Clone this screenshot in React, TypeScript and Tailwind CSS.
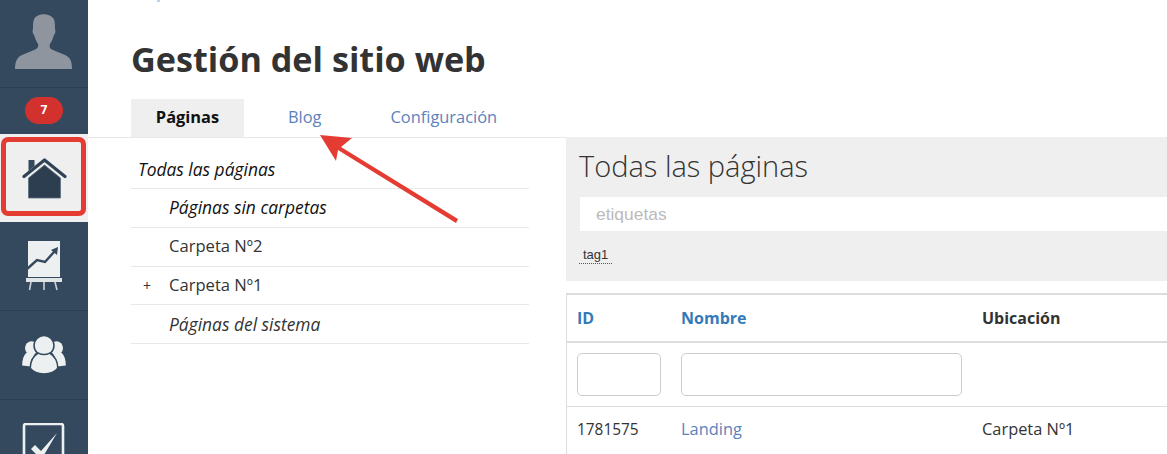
const sideItem = 'flex items-center justify-center border-b border-[#2c3e50]';

const Avatar = () => (
  <svg width="58" height="56" viewBox="0 0 58 56" fill="#8e959e">
    <path d="M22 2c5-3 12-2 15 1 3 2 3 7 3 12 1 2 0 5-1 6-1 3-2 6-4 9-1 3 0 5 3 6l12 5c4 2 7 4 7 14H0c0-9 3-12 7-14l12-5c3-1 5-3 4-6-2-3-3-6-4-9-1-1-2-4-1-6 0-6 0-11 4-13z" />
  </svg>
);

const HomeIcon = () => (
  <svg width="46" height="44" viewBox="0 0 46 44">
    <path d="M7.500 22 23.500 9 39.500 22V42H7.500z" fill="#2c3e50" stroke="#5b6d7f" strokeWidth="0.8" />
    <path d="M3 20.500 23.500 4 44 20.500" fill="none" stroke="#2f4256" strokeWidth="3.2" strokeLinecap="round" strokeLinejoin="round" />
    <path d="M7.500 4h6v6l-6 5z" fill="#34495e" />
  </svg>
);

const ChartIcon = () => (
  <svg width="36" height="50" viewBox="0 0 36 50">
    <rect x="2" y="0" width="32" height="36" fill="#ecf0f1" />
    <rect x="0" y="37" width="36" height="4" fill="#dfe4e7" />
    <path d="M5 41 3.500 49M18 41v8M29 41l2 8" stroke="#ccd3d8" strokeWidth="1.6" fill="none" />
    <path d="M1 28 11 19l8 2 9-10" stroke="#34495e" strokeWidth="2.4" fill="none" />
    <path d="M25 9l7-3-1 8z" fill="#34495e" />
  </svg>
);

const UsersIcon = () => (
  <svg width="44" height="38" viewBox="0 0 46 40" fill="#ecf0f1">
    <circle cx="10" cy="12.500" r="7" />
    <circle cx="36" cy="12.500" r="7" />
    <path d="M0 31c0-6 1.500-11 5-14l9 1c-3 4-5 9-5 14z" />
    <path d="M46 31c0-6-1.500-11-5-14l-9 1c3 4 5 9 5 14z" />
    <circle cx="23" cy="10" r="10.500" stroke="#34495e" strokeWidth="1.6" />
    <path d="M8.500 34c0-8 3-13 8.500-16 4 2 8 2 12 0 5 3 8.500 8 8.500 16-3 4-9 6-14.500 6s-11.500-2-14.500-6z" stroke="#34495e" strokeWidth="1.6" />
  </svg>
);

const CheckIcon = () => (
  <svg width="44" height="32" viewBox="0 0 44 32">
    <path d="M2 32V3a2 2 0 0 1 2-2h35a2 2 0 0 1 2 2v29" fill="none" stroke="#ecf0f1" strokeWidth="2.6" />
    <path d="M9 26l4-4 6 6L35 10 22 32H15z" fill="#ecf0f1" />
  </svg>
);

const Sidebar = () => (
  <div className="flex h-[454px] w-[88px] shrink-0 flex-col overflow-hidden bg-[#34495e]">
    <div className="flex h-[88px] shrink-0 items-center justify-center border-b border-[#2c3e50] pb-[4px]">
      <Avatar />
    </div>
    <div className="flex h-[46px] shrink-0 items-center justify-center pb-[2px]">
      <span className="flex h-[27px] w-[38px] items-center justify-center rounded-full bg-[#d2312d] text-[12px] font-bold text-white">7</span>
    </div>
    <div className="h-[88px] shrink-0 bg-[#efefef] pl-[1px] pt-[3px]">
      <div className="flex h-[79px] w-[85px] items-center justify-center rounded-[7px] border-[5px] border-[#e43c32] pt-[3px]">
        <HomeIcon />
      </div>
    </div>
    <div className={`${sideItem} h-[89px] shrink-0`}><ChartIcon /></div>
    <div className={`${sideItem} h-[89px] shrink-0`}><UsersIcon /></div>
    <div className="flex shrink-0 justify-center pt-[23px]"><CheckIcon /></div>
  </div>
);

const folders = [
  { label: 'Todas las páginas', cls: 'h-[51px] pl-[7px] pt-[12px] text-[17.4px] italic text-[#111]' },
  { label: 'Páginas sin carpetas', cls: 'h-[39px] pl-[38px] pb-[1px] text-[17.4px] italic text-[#111]' },
  { label: 'Carpeta Nº2', cls: 'h-[39px] pl-[38px] pb-[1px] text-[16.6px] text-[#333]' },
  { label: 'Carpeta Nº1', cls: 'h-[38px] pl-[38px] text-[16.6px] text-[#333]', plus: true },
  { label: 'Páginas del sistema', cls: 'h-[39px] pl-[38px] text-[17.4px] italic text-[#333]' },
];

export default function App() {
  return (
    <div className="relative flex h-[454px] w-[1167px] overflow-hidden bg-white font-['Open_Sans',sans-serif] text-[16.4px] text-[#333]">
      <Sidebar />
      <div className="min-w-0 flex-1">
        <div className="h-[99px] pl-[43px] pt-[37px]">
          <h1 className="text-[34.2px] leading-[44px] font-bold text-[#333]">Gestión del sitio web</h1>
        </div>

        {/* Tabs */}
        <div className="flex h-[39px] border-b border-[#e8e8e8] pl-[43px]">
          <div className="flex h-[38px] w-[113px] items-center justify-center bg-[#efefef] pb-[1px] font-bold text-[#111]">Páginas</div>
          <div className="ml-[18px] flex h-[38px] items-center px-[26px] pb-[1px] text-[#5b82bd]">Blog</div>
          <div className="ml-[17px] flex h-[38px] items-center px-[26px] pb-[1px] text-[#5b82bd]">Configuración</div>
        </div>

        <div className="flex pl-[43px]">
          {/* Folder list */}
          <div className="w-[398px] shrink-0">
            {folders.map((f) => (
              <div key={f.label} className={`relative flex items-center border-b border-[#e8e8e8] ${f.cls}`}>
                {f.plus && <span className="absolute left-[12px] text-[14px]">+</span>}
                {f.label}
              </div>
            ))}
          </div>

          {/* Right column */}
          <div className="-mt-px ml-[37px] min-w-0 flex-1">
            <div className="h-[144px] bg-[#efefef] pl-[13px] pt-[11px]">
              <h2 className="text-[29px] leading-[36px] font-light text-[#333]">Todas las páginas</h2>
              <div className="mt-[13px] ml-[1px] flex h-[34px] items-center bg-white pl-[16px] font-['Liberation_Sans',sans-serif] text-[17.4px] text-[#bbb]">etiquetas</div>
              <span className="mt-[16px] inline-block border-b border-dotted border-[#555] px-[4px] font-['Liberation_Sans',sans-serif] text-[13px] leading-[16px] text-[#333]">tag1</span>
            </div>

            <div className="mt-[12px] border-t-2 border-l border-[#ddd]">
              <div className="grid h-[48px] grid-cols-[104px_301px_1fr] items-center border-b-2 border-[#ddd] pl-[10px] text-[16px] font-bold">
                <span className="text-[#337ab7]">ID</span>
                <span className="text-[#337ab7]">Nombre</span>
                <span className="text-[#333]">Ubicación</span>
              </div>
              <div className="grid h-[64px] grid-cols-[104px_301px_1fr] border-b border-[#ddd] pl-[10px] pt-[10px]">
                <input aria-label="ID" className="h-[43px] w-[84px] rounded-[5px] border border-[#ccc] bg-white" />
                <input aria-label="Nombre" className="h-[43px] w-[281px] rounded-[5px] border border-[#ccc] bg-white" />
              </div>
              <div className="grid h-[48px] grid-cols-[104px_301px_1fr] items-center pb-[3px] pl-[10px]">
                <span className="text-[15.4px]">1781575</span>
                <span className="text-[#5b82bd]">Landing</span>
                <span>Carpeta Nº1</span>
              </div>
            </div>
          </div>
        </div>
      </div>

      {/* Clipped speck at the top edge */}
      <span className="absolute left-[157px] top-0 h-[2px] w-[3px] bg-[#bcd4ea]" />

      {/* Annotation arrow */}
      <svg className="absolute left-0 top-0" width="1167" height="454" fill="none">
        <path d="M320 135 352 138 341 147 458 219 456 223 338 150 336 161z" fill="#e43c32" />
      </svg>
    </div>
  );
}
